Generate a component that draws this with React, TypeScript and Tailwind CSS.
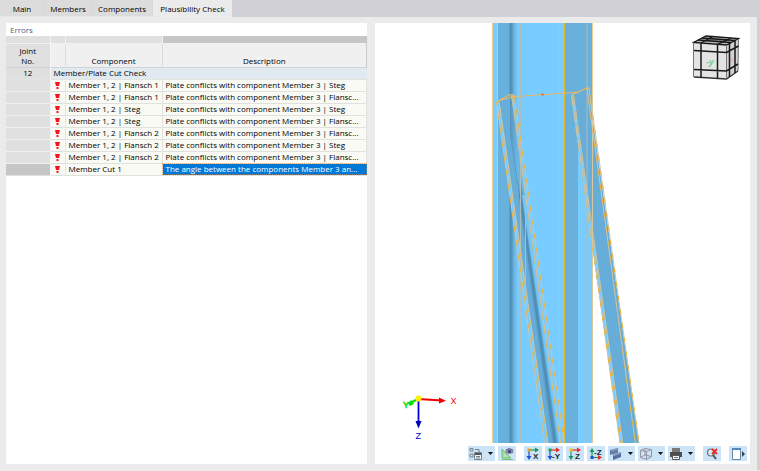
import { useState, type ReactNode } from 'react';

const tabs = [
  { name: 'Main', width: 'w-[45px]' },
  { name: 'Members', width: 'w-[47px]' },
  { name: 'Components', width: 'w-[61px]' },
  { name: 'Plausibility Check', width: 'w-[79px]' },
];

const steg = 'Plate conflicts with component Member 3 | Steg';
const flansch = 'Plate conflicts with component Member 3 | Flansc...';

const rows = [
  ['Member 1, 2 | Flansch 1', steg],
  ['Member 1, 2 | Flansch 1', flansch],
  ['Member 1, 2 | Steg', steg],
  ['Member 1, 2 | Steg', flansch],
  ['Member 1, 2 | Flansch 2', flansch],
  ['Member 1, 2 | Flansch 2', steg],
  ['Member 1, 2 | Flansch 2', flansch],
  ['Member Cut 1', 'The angle between the components Member 3 an...'],
];

function ErrorMark() {
  return (
    <svg className="mx-auto block" width="5" height="8" viewBox="0 0 5 8" role="img" aria-label="Error">
      <path d="M0 1H5L4 5H1Z" fill="#f5141c" />
      <rect x="1.500" y="6" width="2" height="2" fill="#f5141c" />
    </svg>
  );
}

function ErrorTable() {
  const [selected, setSelected] = useState(7);
  return (
    <table className="w-full table-fixed border-collapse text-[8px] leading-[10px]">
      <colgroup>
        <col className="w-[44px]" />
        <col className="w-[15px]" />
        <col className="w-[97px]" />
        <col />
      </colgroup>
      <thead>
        <tr className="h-[7px] bg-[#e0e0e0]">
          <td className="border-r border-[#f2f2f2] p-0" />
          <td className="border-r border-[#f2f2f2] p-0" />
          <td className="border-r border-[#f2f2f2] p-0" />
          <td className="bg-[#c6c6c6] p-0" />
        </tr>
        <tr className="h-[24px] border-t border-b border-t-[#f2f2f2] border-b-[#cfd3d6] bg-[#f0f0f0] align-bottom">
          <th className="border-r border-[#f6f6f6] bg-[#e0e0e0] p-0 pb-px font-normal">
            Joint
            <br />
            No.
          </th>
          <th className="border-r border-[#dcdcdc] p-0" />
          <th className="border-r border-[#dcdcdc] p-0 pb-px font-normal">Component</th>
          <th className="border-r border-[#cccccc] p-0 pb-px font-normal">Description</th>
        </tr>
      </thead>
      <tbody>
        <tr className="h-[12px] border-b border-[#e3e3df]">
          <td className="border-r border-[#f6f6f6] bg-[#e0e0e0] p-0 text-center">12</td>
          <td colSpan={3} className="bg-[#e1eaf1] p-0 pl-[3px]">
            Member/Plate Cut Check
          </td>
        </tr>
        {rows.map(([component, description], i) => (
          <tr key={i} onClick={() => setSelected(i)} className="h-[12px] border-b border-[#e0e0dc] bg-[#f9faf4]">
            <td
              className={
                i === selected
                  ? 'border-r border-[#f6f6f6] bg-[#c6c6c6] p-0'
                  : 'border-r border-b border-r-[#f6f6f6] border-b-[#f0f0f0] bg-[#e0e0e0] p-0'
              }
            />
            <td className="border-r border-[#e3e3df] p-0">
              <ErrorMark />
            </td>
            <td className="border-r border-[#e3e3df] p-0 pl-[3px] whitespace-nowrap">{component}</td>
            <td
              className={
                i === selected
                  ? 'bg-[#0078d7] p-0 pl-[3px] whitespace-nowrap text-white outline-1 -outline-offset-1 outline-dotted outline-[#e58b3b]/60'
                  : 'border-r border-[#e3e3df] p-0 pl-[3px] whitespace-nowrap'
              }
            >
              {description}
            </td>
          </tr>
        ))}
      </tbody>
    </table>
  );
}

function Scene() {
  return (
    <svg
      className="block h-full w-full"
      viewBox="375 23 375 420"
      preserveAspectRatio="xMidYMid slice"
      role="img"
      aria-label="3D view of the steel joint"
    >
      <defs>
        <linearGradient id="web" gradientUnits="userSpaceOnUse" x1="509" y1="0" x2="518" y2="0">
          <stop offset="0" stopColor="#69b1dd" />
          <stop offset="0.12" stopColor="#4e8bb0" />
          <stop offset="0.34" stopColor="#5797bf" />
          <stop offset="0.55" stopColor="#69b4e2" />
          <stop offset="1" stopColor="#78ccff" />
        </linearGradient>
        <linearGradient id="brace" gradientUnits="userSpaceOnUse" x1="518" y1="200" x2="529" y2="198">
          <stop offset="0" stopColor="#66add9" />
          <stop offset="0.22" stopColor="#4f8eb5" />
          <stop offset="0.4" stopColor="#5592ba" />
          <stop offset="0.65" stopColor="#6abae9" />
          <stop offset="1" stopColor="#78ccff" />
        </linearGradient>
        <linearGradient id="braceTop" gradientUnits="userSpaceOnUse" x1="510" y1="0" x2="517" y2="0">
          <stop offset="0" stopColor="#5594bb" />
          <stop offset="1" stopColor="#6bb5e3" />
        </linearGradient>
      </defs>

      <rect x="492" y="23" width="101" height="420" fill="#78ccff" />
      <rect x="498" y="23" width="12" height="420" fill="#69b1dd" />
      <rect x="509" y="23" width="10" height="420" fill="url(#web)" />
      <rect x="565" y="23" width="13" height="420" fill="#69b1dd" />
      <rect x="578" y="23" width="14" height="80" fill="#69b1dd" />
      <path d="M578 103V140L574 95Z" fill="#69b1dd" />

      <path d="M496.500 102 512 94 563 443H547Z" fill="#66add9" />
      <path d="M510 95H513L529 210 561 443H553L520 200 510 135Z" fill="url(#brace)" />
      <path d="M510 95H513L519 150 521 200 510 135Z" fill="url(#braceTop)" />
      <path d="M521 195 528 195 562 443H553Z" fill="#74c6f8" />
      <path d="M518 195H522L558 443H552Z" fill="#5fa4ce" />
      <path d="M519 195H521.500L556.500 443H553.500Z" fill="#4f8eb5" />
      <path d="M496.700 102H499.500L548 443H544.500Z" fill="#78ccff" />
      <path d="M511.500 95H514L564 443H560.500Z" fill="#78ccff" />

      <path d="M571 95 588 87 639 443H620Z" fill="#66add9" />
      <path d="M571 95H573.500L622.700 443H620Z" fill="#78ccff" />

      <g fill="none" stroke="#e2c596">
        <path d="M492.500 23V443M592.500 23V443" stroke="#f1cc8a" />
        <path d="M497.500 23V443" stroke="#d9c3a0" />
        <path d="M520.500 23V443M525.500 23V443M587 23V443" stroke="#aebdb9" />
        <path d="M592.500 95V443" stroke="#d8c69c" />
        <path d="M559.500 23V443" stroke="#dfbd64" />
        <path d="M564.500 23V443" stroke="#e9b92c" />
      </g>

      <g fill="none" stroke="#d8c39a" strokeWidth="1">
        <path d="M496.700 102 544.500 443M499 101 548 443M511.500 95 560.700 443M514 95 564.300 443" />
        <path d="M571.500 95 620 443M573.500 95 622.700 443M587 88 635.300 443M589 88 639 443" />
      </g>
      <g fill="none" stroke="#f0b332" strokeWidth="1" strokeDasharray="4 10">
        <path d="M496.700 102 544.500 443M499 101 548 443M511.500 95 560.700 443M514 95 564.300 443" />
        <path d="M571.500 95 620 443M573.500 95 622.700 443M587 88 635.300 443M589 88 639 443" />
      </g>
      <g fill="none" stroke="#e5b965" strokeWidth="1.200">
        <path d="M496.500 102 510 94.500 514 95M497 101 513 97M510 97 578 92M571 95 576 93 588 87.500 589 89M571 95 579 92" />
      </g>
      <rect x="541.500" y="93.500" width="2" height="2" fill="#e0652c" />
    </svg>
  );
}

function NavigationCube() {
  return (
    <svg className="absolute top-[12px] right-[10px]" width="48" height="46" viewBox="692 35 48 46" role="img" aria-label="Navigation cube">
      <path d="M693.500 42.500 706 36 738.500 38.500 726.500 45Z" fill="#b5b5b5" />
      <path d="M693.500 42.500 726.500 45V79L694 77Z" fill="#e4e4e4" />
      <path d="M726.500 45 738.500 38.500 738 71 726.500 79Z" fill="#d2d2d2" />
      <path d="M705 41 712 38 731 39.500 724 43Z" fill="#8f8f8f" />
      <g fill="none" stroke="#181818" strokeWidth="1.300">
        <path d="M693.500 42.500 706 36 738.500 38.500 726.500 45Z" />
        <path d="M698 40 731 42.500M702 38 735 40.500M701 43 713 36.500M717.500 44.500 731 38" />
        <path d="M694 77 726.500 79 738 71" stroke="#333" />
      </g>
      <path d="M693.500 42.500V77M738.500 39 738 71M726.500 45V79" fill="none" stroke="#777" />
      <g fill="none" stroke="#181818" strokeWidth="1.500">
        <path d="M701 43V77.500M717.500 44.500V78.500M694 50.500 726.500 52.500 738.500 46M694 69.500 726.500 71 738 64M729.500 43V77M735 40.500V73" />
      </g>
      <text x="706" y="65" fontSize="9" fontWeight="700" fontStyle="italic" fill="#7fce8d" fontFamily="Open Sans, sans-serif">
        -y
      </text>
      <path d="M731 58 733 61" stroke="#df9b91" />
    </svg>
  );
}

function Axes() {
  return (
    <svg className="absolute bottom-0 left-[25px]" width="62" height="54" viewBox="400 389 62 54" role="img" aria-label="Coordinate axes">
      <path d="M418 399 442 400.500" stroke="#f00000" strokeWidth="1.800" />
      <path d="M439 397.500 446 400.700 439 403.500Z" fill="#f00000" />
      <path d="M418.500 399V424" stroke="#0000dc" strokeWidth="1.800" />
      <path d="M415.500 421H421.500L418.500 428.500Z" fill="#0000b8" />
      <path d="M418 399 410 403" stroke="#00dc00" strokeWidth="2" />
      <path d="M408 403.500 411 400 414 404 410 406Z" fill="#00e000" />
      <circle cx="418.500" cy="398.500" r="3" fill="#fff000" />
      <g fontFamily="Liberation Sans, sans-serif" fontSize="9">
        <text x="450.500" y="404" fill="#f00000">X</text>
        <text x="403" y="408" fill="#00dc00" stroke="#00dc00" strokeWidth="0.500">Y</text>
        <text x="415.500" y="439" fill="#0000c8">Z</text>
      </g>
    </svg>
  );
}

function ToolButton({ label, menu, className = '', children }: { label: string; menu?: boolean; className?: string; children: ReactNode }) {
  return (
    <button
      type="button"
      aria-label={label}
      className={`flex h-[15px] shrink-0 items-center gap-[5px] bg-[#cce4f7] ${menu ? 'w-[27px] pl-px' : 'w-[18px] justify-center'} ${className}`}
    >
      <svg width="14" height="14" viewBox="0 0 14 14" aria-hidden="true">
        {children}
      </svg>
      {menu && (
        <svg width="5" height="3" viewBox="0 0 5 3" aria-hidden="true">
          <path d="M0 0H5L2.500 3Z" fill="#111" />
        </svg>
      )}
    </button>
  );
}

function AxisIcon({ letter, right, down, origin }: { letter: string; right: string; down: string; origin: string }) {
  return (
    <>
      <path d="M3 3H10" stroke={right} strokeWidth="1.200" />
      <path d="M9 0.500 13 3 9 5.500Z" fill={right} />
      <path d="M3 3V10" stroke={down} strokeWidth="1.200" />
      <path d="M0.500 9H5.500L3 13Z" fill={down} />
      <rect x="1.500" y="1.500" width="3" height="3" fill={origin} />
      <text x={letter.length > 1 ? 5 : 7} y="12" fontSize="8" fontWeight="700" fill="#20282e" fontFamily="Liberation Sans, sans-serif">
        {letter}
      </text>
    </>
  );
}

function Toolbar() {
  return (
    <div className="flex h-[21px] shrink-0 items-start justify-end gap-[3px] pt-[3px] pr-[3px]">
      <ToolButton label="Display options" menu>
        <g fill="none" stroke="#77828c">
          <path d="M1 1.500H4V4H1ZM1 7H4V10H1ZM6 2.500H10V5" />
          <path d="M5.500 5.500H12.500V12.500H5.500Z" fill="#f4f6f7" />
          <path d="M6 7H12" stroke="#4d5963" strokeWidth="2" />
          <path d="M7 9.500H11M7 11H11" />
        </g>
      </ToolButton>
      <ToolButton label="Visibility settings" className="mr-[5px]">
        <path d="M2 2V11H11Z" fill="#a5dba5" stroke="#70bf75" />
        <path d="M4 7V9.500H6.500Z" fill="#cce4f7" />
        <path d="M2 12.500H13" stroke="#79bd7d" />
        <ellipse cx="9.500" cy="4.500" rx="4" ry="2.500" fill="#8d91b3" />
        <circle cx="9.500" cy="4.500" r="1.600" fill="#3b3d70" />
        <path d="M6 3Q9 0 13 3" fill="none" stroke="#555980" />
      </ToolButton>
      <ToolButton label="View in X">
        <AxisIcon letter="X" right="#16995c" down="#234fcf" origin="#f0a020" />
      </ToolButton>
      <ToolButton label="View in -Y">
        <AxisIcon letter="-Y" right="#e92a20" down="#234fcf" origin="#16a34a" />
      </ToolButton>
      <ToolButton label="View in Z">
        <AxisIcon letter="Z" right="#e92a20" down="#16995c" origin="#f0c020" />
      </ToolButton>
      <ToolButton label="View in -Z">
        <path d="M3 10V4M3 10.500H10" stroke="#16995c" strokeWidth="1.200" />
        <path d="M0.500 5 3 1 5.500 5Z" fill="#16995c" />
        <path d="M9 8 13 10.500 9 13Z" fill="#e92a20" />
        <rect x="1.500" y="9" width="3" height="3" fill="#234fcf" />
        <text x="5" y="8" fontSize="8" fontWeight="700" fill="#20282e" fontFamily="Liberation Sans, sans-serif">-Z</text>
      </ToolButton>
      <ToolButton label="Rendering mode" menu>
        <path d="M1 3 9 1V6L1 8Z" fill="#657ca9" />
        <path d="M4 8 12 5V10L4 13Z" fill="#5270a3" />
        <path d="M1 3 8 1 10 2 3 4ZM4 8 11 5 13 6 5 9Z" fill="#91a7c9" />
      </ToolButton>
      <ToolButton label="Box view" menu>
        <path d="M1.500 3.500 7.500 4.500V12.500L1.500 10.500ZM1.500 3.500 6 1.500 12.500 2.500 7.500 4.500M7.500 12.500 12.500 9.500V2.500M6 2V8L1.500 10.500M6 8 12.500 9.500" fill="none" stroke="#94969f" />
      </ToolButton>
      <ToolButton label="Print" menu className="mr-[5px]">
        <path d="M3 1H11V5H3Z" fill="#7a7a7a" />
        <path d="M1 5H13V10H1Z" fill="#4c4f51" />
        <path d="M3.500 8.500H10.500V12.500H3.500Z" fill="#f5f5f5" stroke="#555" />
        <path d="M5 10.500H9" stroke="#777" />
      </ToolButton>
      <ToolButton label="Cancel zoom" className="mr-[5px]">
        <circle cx="6" cy="5.500" r="3.500" fill="#dceaf2" stroke="#65727a" strokeWidth="1.200" />
        <path d="M8 8 11 12" stroke="#4b555b" strokeWidth="2" />
        <path d="M7 2 12 7M12 2 7 7" stroke="#ee2820" strokeWidth="1.800" />
      </ToolButton>
      <ToolButton label="Show side panel">
        <path d="M1.500 1.500H9.500V12.500H1.500Z" fill="#fff" stroke="#6d87a1" />
        <path d="M1 1H10V3H1Z" fill="#5686c1" />
        <path d="M11 4 14 7 11 10Z" fill="#33434f" />
      </ToolButton>
    </div>
  );
}

export default function App() {
  const [active, setActive] = useState(3);
  return (
    <div className="flex h-screen flex-col bg-[#ebebeb] pb-px font-['Open_Sans','Noto_Sans',sans-serif] text-[8px] text-black">
      <nav className="flex h-[17px] shrink-0 bg-[#d1d0d6]" aria-label="Dialog tabs">
        {tabs.map((tab, i) => (
          <button
            key={tab.name}
            type="button"
            onClick={() => setActive(i)}
            className={`${tab.width} pt-px leading-[14px] whitespace-nowrap ${
              i === active ? 'bg-[#ebebeb]' : 'border-r border-b border-[#d7d7d7] border-b-[#e6e6e6] bg-[#dcdcdc]'
            }`}
          >
            {tab.name}
          </button>
        ))}
      </nav>
      <main className="flex min-h-0 flex-1 gap-[8px] border-r-[3px] border-[#d1d0d6] pt-[6px] pr-[7px] pb-[6px] pl-[6px]">
        <section className="w-[361px] shrink-0 overflow-hidden bg-white" aria-label="Errors">
          <h2 className="h-[13px] pl-[4px] leading-[13px] text-[#4b5f85]">Errors</h2>
          <ErrorTable />
        </section>
        <section className="flex min-w-0 flex-1 flex-col bg-white" aria-label="Model view">
          <div className="relative min-h-0 flex-1">
            <Scene />
            <NavigationCube />
            <Axes />
          </div>
          <Toolbar />
        </section>
      </main>
    </div>
  );
}
